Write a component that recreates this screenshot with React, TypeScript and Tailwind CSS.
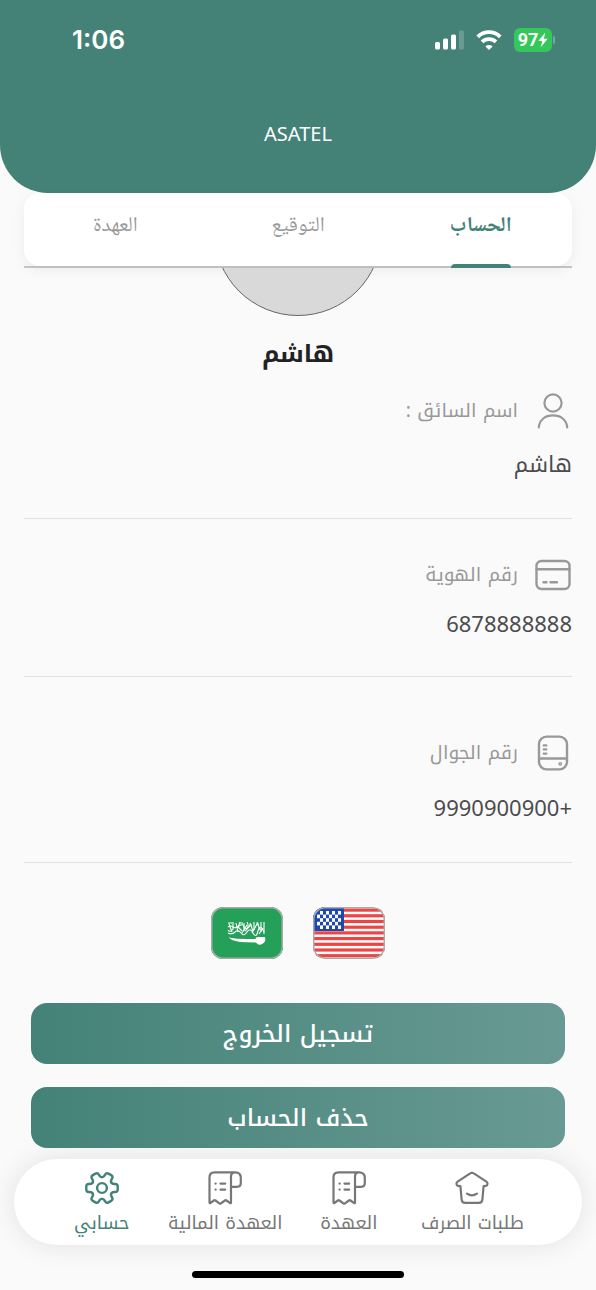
import type { ComponentType } from 'react'
import { clsx } from 'clsx'

type IconProps = { className?: string }

function PersonIcon({ className }: IconProps) {
  return (
    <svg width="32" height="36" viewBox="0 0 32 36" fill="none" stroke="currentColor" strokeWidth="2.2" strokeLinecap="round" className={className} aria-hidden="true">
      <circle cx="16" cy="10" r="8.6" />
      <path d="M1.8 34.5C2.4 26.6 8.4 22.4 16 22.4s13.6 4.2 14.2 12.1" />
    </svg>
  )
}

function CardIcon({ className }: IconProps) {
  return (
    <svg width="36" height="32" viewBox="0 0 36 32" fill="none" stroke="currentColor" strokeWidth="2.4" strokeLinecap="round" className={className} aria-hidden="true">
      <rect x="1.5" y="2" width="33" height="28" rx="5" />
      <path d="M1.5 10.3h33M8.5 23.3h3M15.5 23.3h6.5" />
    </svg>
  )
}

function DeviceIcon({ className }: IconProps) {
  return (
    <svg width="32" height="36" viewBox="0 0 32 36" fill="none" stroke="currentColor" strokeWidth="2.4" strokeLinecap="round" className={className} aria-hidden="true">
      <rect x="2" y="1.6" width="28" height="32.8" rx="7.5" />
      <path d="M2 23.5h28M6.8 10.4h2.4M6.8 14.4h2.4M6.8 18.6h2.4" />
      <circle cx="23.2" cy="28.8" r="0.7" />
    </svg>
  )
}

function HomeIcon({ className }: IconProps) {
  return (
    <svg width="34" height="34" viewBox="0 0 34 34" fill="none" stroke="currentColor" strokeWidth="2.2" strokeLinecap="round" strokeLinejoin="round" className={className} aria-hidden="true">
      <path d="M15.2 2.4a3.4 3.4 0 0 1 3.6 0l12.6 8.2c1.6 1.1 1.5 3.9-.4 4.2l-2.4.4-1.2 13.2c-.2 2.2-1.6 3.5-3.8 3.5H10.4c-2.2 0-3.6-1.3-3.8-3.5L5.4 15.2l-2.4-.4c-1.9-.3-2-3.1-.4-4.2z" />
      <path d="M12 22.6q5 3.4 10 0" />
    </svg>
  )
}

function ReceiptIcon({ className }: IconProps) {
  return (
    <svg width="34" height="34" viewBox="0 0 34 34" fill="none" stroke="currentColor" strokeWidth="2.2" strokeLinecap="round" strokeLinejoin="round" className={className} aria-hidden="true">
      <path d="M27.5 1.3H6.5q-5 0-5 5V31.5q0 1.2 1.1.4l3.3-2.4q.8-.6 1.6 0l3.9 2.8q.8.6 1.6 0l3.9-2.8q.8-.6 1.6 0l3.3 2.4q1.2.8 1.2-.4V5.5q0-4.2 4-4.2 5.8 0 5.8 5.4v5.3q0 3.8-3.8 3.8h-6" />
      <path d="M12.5 12.6h4.7M12.5 18.6h4.7M7.5 12.6h.2M7.5 18.6h.2" />
    </svg>
  )
}

function GearIcon({ className }: IconProps) {
  return (
    <svg width="34" height="34" viewBox="-17 -17 34 34" fill="none" stroke="currentColor" strokeWidth="2.4" strokeLinecap="round" strokeLinejoin="round" className={className} aria-hidden="true">
      {[0, 60, 120, 180, 240, 300].map((angle) => (
        <path key={angle} transform={`rotate(${angle})`} d="M9.4-5.4Q10.2-4 12-4h1.2q2.5 0 2.5 2.5v3q0 2.5-2.5 2.5H12Q10.2 4 9.4 5.4" />
      ))}
      <circle r="4.9" />
    </svg>
  )
}

function StatusBar() {
  return (
    <div dir="ltr" className="flex h-20 items-center justify-between pl-[72px] pr-[41px] font-['Inter',sans-serif] text-white">
      <span className="text-[26px] font-semibold leading-8">1:06</span>
      <div className="flex items-center gap-3">
        <svg width="29" height="20" viewBox="0 0 29 20" fill="currentColor" aria-hidden="true">
          <rect x="0" y="12" width="5" height="7.5" rx="1.5" />
          <rect x="8" y="8.5" width="5" height="11" rx="1.5" />
          <rect x="16" y="4.5" width="5" height="15" rx="1.5" />
          <rect x="24" y="0.5" width="5" height="19" rx="1.5" opacity="0.2" />
        </svg>
        <svg width="26" height="20" viewBox="0 0 24 19" fill="none" stroke="currentColor" strokeWidth="3.6" aria-hidden="true">
          <path d="M1.3 6.5A15 15 0 0 1 22.7 6.5" />
          <path d="M5.4 11.3A9.6 9.6 0 0 1 18.6 11.3" />
          <path d="M12 19l-3.4-3.4a5 5 0 0 1 6.8 0z" fill="currentColor" stroke="none" />
        </svg>
        <div className="flex items-center gap-px">
          <span className="flex h-6 w-[38px] items-center justify-center rounded-md bg-[#34c759] font-['Roboto',sans-serif] text-lg font-bold leading-5">
            97
            <svg width="10" height="16" viewBox="0 0 10 16" fill="currentColor" aria-hidden="true">
              <path d="M7.3 0.5L0.3 9h4L2.6 15.5 9.7 6.8H5.8z" />
            </svg>
          </span>
          <span className="h-2 w-0.5 rounded-r-full bg-white/30" />
        </div>
      </div>
    </div>
  )
}

const tabs = [
  { label: 'الحساب', active: true },
  { label: 'التوقيع', active: false },
  { label: 'العهدة', active: false },
]

function Tabs() {
  return (
    <div className="mx-6 border-b-2 border-[#c4c8c8] font-['Noto_Naskh_Arabic','DejaVu_Sans',sans-serif]">
      <div role="tablist" className="grid h-[73px] grid-cols-3 rounded-2xl bg-white shadow-[0_4px_14px_rgba(0,0,0,0.06)]">
        {tabs.map((tab) => (
          <button
            key={tab.label}
            type="button"
            role="tab"
            aria-selected={tab.active}
            className={clsx(
              'flex h-[75px] flex-col items-center justify-between pt-[18px] text-[21px] leading-8',
              tab.active ? 'font-bold text-[#448278]' : 'text-[#999]',
            )}
          >
            {tab.label}
            {tab.active && <span className="h-1 w-[60px] rounded-t bg-[#448278]" />}
          </button>
        ))}
      </div>
    </div>
  )
}

type FieldProps = {
  icon: ComponentType<IconProps>
  label: string
  value: string
  numeric?: boolean
  className: string
}

function Field({ icon: Icon, label, value, numeric, className }: FieldProps) {
  return (
    <div className={clsx('flex flex-col border-b border-[#e2e2e2]', className)}>
      <dt className="flex h-10 items-center gap-4 text-[19px] text-[#999]">
        <span className="flex w-[38px] justify-center">
          <Icon />
        </span>
        {label}
      </dt>
      <dd className={clsx('text-[22px] leading-8 text-[#4c4c4e]', numeric && "font-['Noto_Sans',sans-serif]")}>
        {value}
      </dd>
    </div>
  )
}

function UsaFlag() {
  return (
    <svg width="72" height="52" viewBox="0 0 72 52" aria-hidden="true" className="rounded-xl">
      <rect width="72" height="52" fill="#fff" />
      {[0, 1, 2, 3, 4, 5, 6, 7, 8].map((row) => (
        <rect key={row} y={1.5 + row * 5.7} width="72" height="3.2" fill="#ef4444" />
      ))}
      <rect width="31" height="24" fill="#1e47b0" />
      {[0, 1, 2, 3, 4].map((row) =>
        [0, 1, 2, 3].map((col) => (
          <rect key={`${row}-${col}`} x={7 - (row % 2) * 3 + col * 6} y={4 + row * 3.6} width="3" height="3.6" fill="#fff" />
        )),
      )}
      <rect x="0.75" y="0.75" width="70.5" height="50.5" rx="11.5" fill="none" stroke="#aaa" strokeWidth="1.5" />
    </svg>
  )
}

function SaudiFlag() {
  return (
    <svg width="72" height="52" viewBox="0 0 72 52" aria-hidden="true" className="rounded-xl">
      <rect width="72" height="52" fill="#24a058" />
      <g fill="none" stroke="#fff" strokeWidth="1.1">
        <path d="M18 17l3 8M22 15v7q-3 4-5 1M25 16l2 9M29 15l-2 5 4 4M33 16v8M36 15q3 6-2 9M39 16l3 8M43 15v8M46 15l3 8M50 15v10M53 15v12" />
        <path d="M17 26q4 2 7-1t6 1 6-1 6 1 5-2 6 1M17 20q3-2 5 0t6-1 5 1 6-1M17 16h4M29 16h3M38 18h3M45 17h3M31 26l5-8M41 26l5-9M48 27l4-6" />
      </g>
      <path d="M17.5 30.5q8 1.5 18 1.5h9q0-2 3-2h6.5q1.5 6-4 7.5-3 .8-5-2l-9-.2q-13 .2-18.5-4.8z" fill="#fff" />
      <rect x="0.75" y="0.75" width="70.5" height="50.5" rx="11.5" fill="none" stroke="#aaa" strokeWidth="1.5" />
    </svg>
  )
}

const navItems = [
  { icon: HomeIcon, label: 'طلبات الصرف', href: '#orders', active: false },
  { icon: ReceiptIcon, label: 'العهدة', href: '#custody', active: false },
  { icon: ReceiptIcon, label: 'العهدة المالية', href: '#finance', active: false },
  { icon: GearIcon, label: 'حسابي', href: '#account', active: true },
]

function BottomNav() {
  return (
    <nav className="mx-3.5 mt-[11px] grid h-[86px] grid-cols-4 items-center rounded-full bg-white pt-1 pr-12 pl-[26px] shadow-[0_0_28px_rgba(0,0,0,0.1)]">
      {navItems.map(({ icon: Icon, label, href, active }) => (
        <a
          key={label}
          href={href}
          className={clsx('flex flex-col items-center gap-1 whitespace-nowrap text-lg leading-7', active ? 'text-[#448278]' : 'text-[#777]')}
        >
          <Icon />
          {label}
        </a>
      ))}
    </nav>
  )
}

const actions = ['تسجيل الخروج', 'حذف الحساب']

export default function App() {
  return (
    <div dir="rtl" className="min-h-screen bg-[#fafafa] font-['Noto_Kufi_Arabic','DejaVu_Sans',sans-serif]">
      <header className="h-[193px] rounded-b-[48px] bg-[#448278]">
        <StatusBar />
        <h1 className="pt-[38px] text-center font-['Noto_Sans',sans-serif] text-xl leading-8 text-white">ASATEL</h1>
      </header>

      <Tabs />

      <main>
        {/* Avatar is scrolled partly under the tabs */}
        <div className="flex h-12 items-end justify-center overflow-hidden">
          <div className="size-[168px] shrink-0 rounded-full border border-[#666] bg-[#d9d9d9]" />
        </div>
        <h2 className="pt-[18px] text-center text-2xl font-bold leading-10 text-[#222]">هاشم</h2>

        <dl className="px-6">
          <Field icon={PersonIcon} label="اسم السائق :" value="هاشم" className="gap-[18px] pt-[17px] pb-[37px]" />
          <Field icon={CardIcon} label="رقم الهوية" value="6878888888" numeric className="gap-3 pt-9 pb-[37px]" />
          <Field icon={DeviceIcon} label="رقم الجوال" value="+9990900900" numeric className="gap-[18px] pt-14 pb-[39px]" />
        </dl>

        <div className="mt-11 flex justify-center gap-[30px]">
          <button type="button" aria-label="English">
            <UsaFlag />
          </button>
          <button type="button" aria-label="العربية">
            <SaudiFlag />
          </button>
        </div>

        <div className="mt-11 flex flex-col gap-[23px] px-[31px]">
          {actions.map((label) => (
            <button
              key={label}
              type="button"
              className="h-[61px] rounded-2xl bg-linear-to-r from-[#448278] to-[#689a93] text-2xl font-medium text-white"
            >
              {label}
            </button>
          ))}
        </div>
      </main>

      <BottomNav />

      <div className="flex justify-center pb-3 pt-[26px]">
        <div className="h-[7px] w-[212px] rounded-full bg-black" />
      </div>
    </div>
  )
}
